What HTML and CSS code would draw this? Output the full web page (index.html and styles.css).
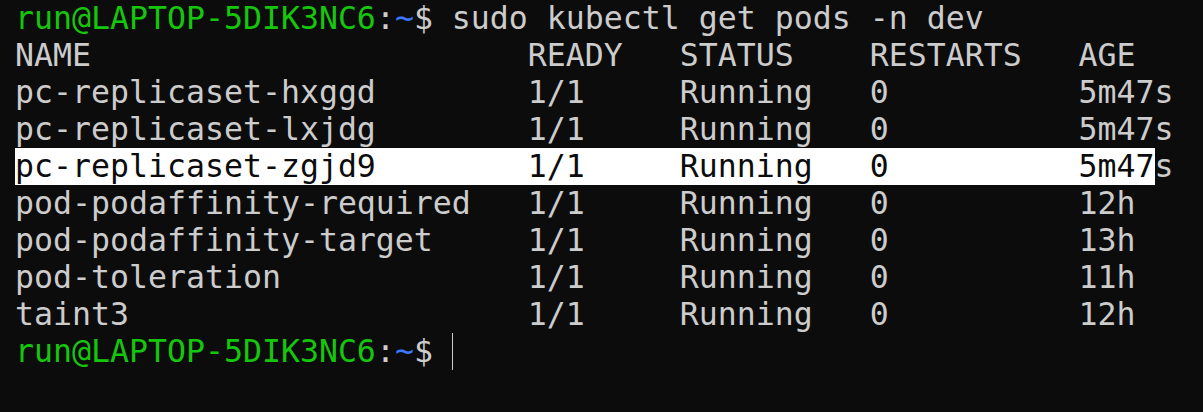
FILE: index.html
```html
<!DOCTYPE html>
<html>
<head>
<meta charset="utf-8">
<link rel="stylesheet" href="styles.css">
</head>
<body>
<div class="term">
<div class="line"><span class="user">run@LAPTOP-5DIK3NC6</span>:<span class="path">~</span>$ sudo kubectl get pods -n dev</div>
<div class="line">NAME                       READY   STATUS    RESTARTS   AGE</div>
<div class="line">pc-replicaset-hxggd        1/1     Running   0          5m47s</div>
<div class="line">pc-replicaset-lxjdg        1/1     Running   0          5m47s</div>
<div class="line"><span class="sel">pc-replicaset-zgjd9        1/1     Running   0          5m47</span>s</div>
<div class="line">pod-podaffinity-required   1/1     Running   0          12h</div>
<div class="line">pod-podaffinity-target     1/1     Running   0          13h</div>
<div class="line">pod-toleration             1/1     Running   0          11h</div>
<div class="line">taint3                     1/1     Running   0          12h</div>
<div class="line"><span class="user">run@LAPTOP-5DIK3NC6</span>:<span class="path">~</span>$ <span class="cursor"></span></div>
</div>
</body>
</html>
```

FILE: styles.css
```css
html, body {
  margin: 0;
  padding: 0;
  background: #0c0c0c;
  height: 100%;
}
.term {
  padding: 0 0 0 15px;
  font-family: "DejaVu Sans Mono", monospace;
  font-size: 31.56px;
  color: #cccccc;
}
.line {
  height: 37px;
  line-height: 37px;
  white-space: pre;
}
.user {
  color: #16c60c;
}
.path {
  color: #3b78ff;
}
.sel {
  background: #ffffff;
  color: #0c0c0c;
  display: inline-block;
  height: 37px;
  vertical-align: top;
}
.cursor {
  display: inline-block;
  width: 1px;
  height: 37px;
  background: #cccccc;
  vertical-align: top;
}
```
